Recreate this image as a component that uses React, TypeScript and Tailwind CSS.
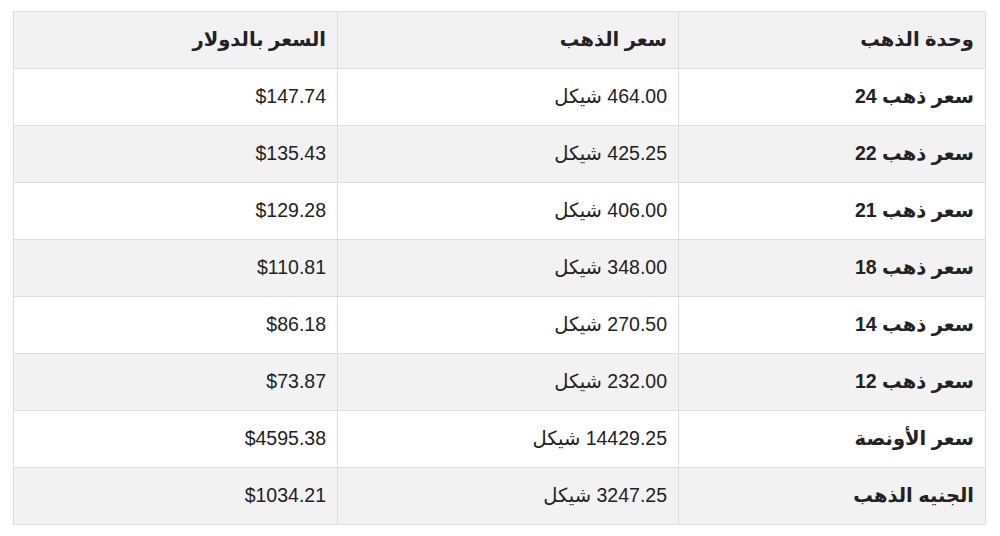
import React from 'react';

type Row = {
  unit: string;
  shekel: string;
  dollar: string;
};

const rows: Row[] = [
  { unit: 'سعر ذهب 24', shekel: '464.00 شيكل', dollar: '$147.74' },
  { unit: 'سعر ذهب 22', shekel: '425.25 شيكل', dollar: '$135.43' },
  { unit: 'سعر ذهب 21', shekel: '406.00 شيكل', dollar: '$129.28' },
  { unit: 'سعر ذهب 18', shekel: '348.00 شيكل', dollar: '$110.81' },
  { unit: 'سعر ذهب 14', shekel: '270.50 شيكل', dollar: '$86.18' },
  { unit: 'سعر ذهب 12', shekel: '232.00 شيكل', dollar: '$73.87' },
  { unit: 'سعر الأونصة', shekel: '14429.25 شيكل', dollar: '$4595.38' },
  { unit: 'الجنيه الذهب', shekel: '3247.25 شيكل', dollar: '$1034.21' },
];

const cell = 'border border-[#dddddd] px-[11px] h-[57px] text-right align-middle';

const App = () => {
  return (
    <div
      className="w-[1000px] h-[536px] bg-white pt-[11px] pl-[13px] text-[#222222] text-[19.5px]"
      style={{ fontFamily: '"Liberation Sans", "DejaVu Sans", Arial, sans-serif' }}
    >
      <table dir="rtl" className="w-[972px] table-fixed border-collapse">
        <colgroup>
          <col className="w-[307px]" />
          <col className="w-[341px]" />
          <col className="w-[324px]" />
        </colgroup>
        <thead>
          <tr className="bg-[#f2f2f2]">
            <th className={`${cell} font-bold`}>وحدة الذهب</th>
            <th className={`${cell} font-bold`}>سعر الذهب</th>
            <th className={`${cell} font-bold`}>السعر بالدولار</th>
          </tr>
        </thead>
        <tbody>
          {rows.map((row, i) => (
            <tr key={row.unit} className={i % 2 === 1 ? 'bg-[#f2f2f2]' : 'bg-white'}>
              <td className={`${cell} font-bold`}>{row.unit}</td>
              <td className={cell}>{row.shekel}</td>
              <td className={cell}>{row.dollar}</td>
            </tr>
          ))}
        </tbody>
      </table>
    </div>
  );
};

export default App;
